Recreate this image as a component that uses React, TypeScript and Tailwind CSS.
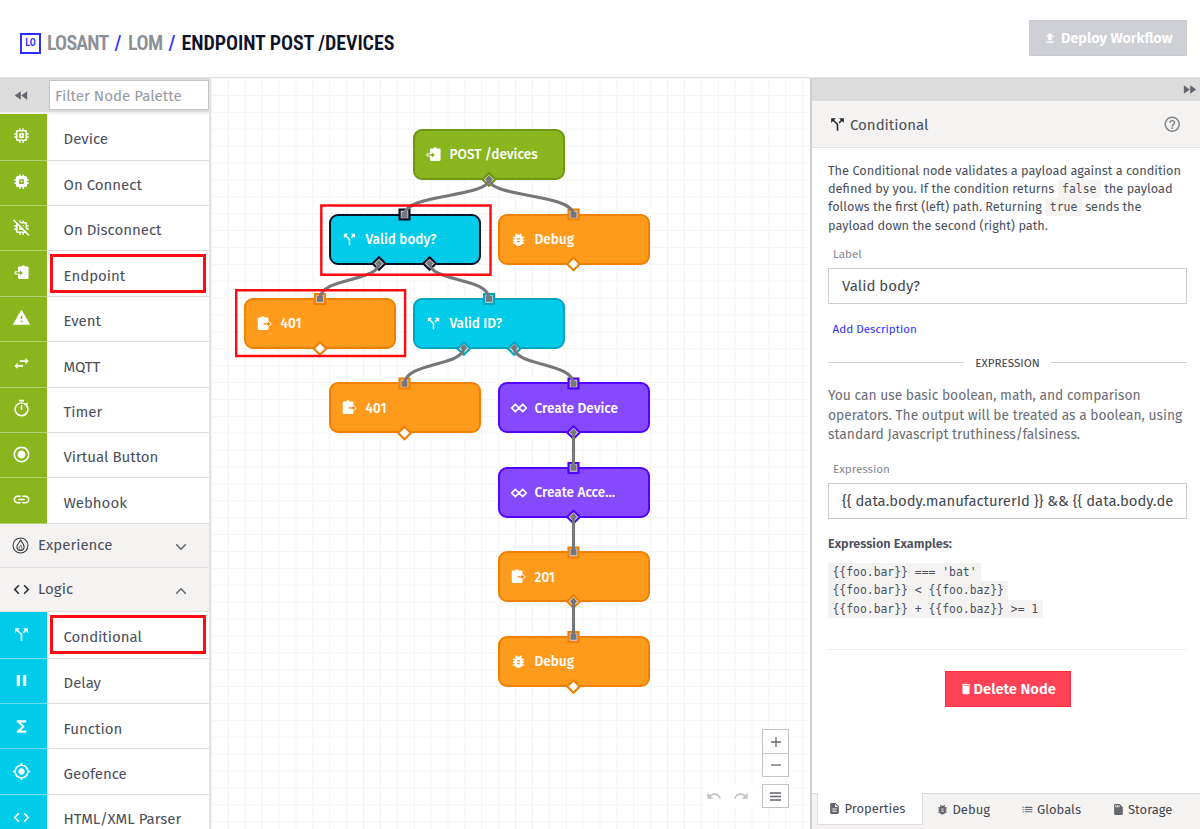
import type { ReactNode } from "react";
import {
  MdBugReport,
  MdCallSplit,
  MdCode,
  MdDelete,
  MdDescription,
  MdFastForward,
  MdFastRewind,
  MdFileUpload,
  MdFunctions,
  MdHelpOutline,
  MdLink,
  MdList,
  MdMemory,
  MdMyLocation,
  MdOutlineTimer,
  MdPause,
  MdRadioButtonChecked,
  MdRedo,
  MdSdStorage,
  MdSwapHoriz,
  MdUndo,
  MdWarning,
} from "react-icons/md";

/* ---------- custom icons ---------- */

function ChipSolid() {
  return (
    <svg viewBox="0 0 24 24" className="size-[19px]" fill="currentColor" fillRule="evenodd">
      <path d="M21 11V9h-2V7a2 2 0 0 0-2-2h-2V3h-2v2h-2V3H9v2H7a2 2 0 0 0-2 2v2H3v2h2v2H3v2h2v2a2 2 0 0 0 2 2h2v2h2v-2h2v2h2v-2h2a2 2 0 0 0 2-2v-2h2v-2h-2v-2zM9 9h6v6H9zm2 2v2h2v-2z" />
    </svg>
  );
}

function ChipOff() {
  return (
    <svg viewBox="0 0 24 24" className="size-[19px]">
      <path
        fill="currentColor"
        d="M15 9H9v6h6V9zm-2 4h-2v-2h2v2zm8-2V9h-2V7c0-1.100-.9-2-2-2h-2V3h-2v2h-2V3H9v2H7c-1.100 0-2 .9-2 2v2H3v2h2v2H3v2h2v2c0 1.100.9 2 2 2h2v2h2v-2h2v2h2v-2h2c1.100 0 2-.9 2-2v-2h2v-2h-2v-2h2zm-4 6H7V7h10v10z"
      />
      <path d="M4 1.500 23 20.500" stroke="#8ab51c" strokeWidth="2.200" />
      <path d="M2 2.500 21.500 22" stroke="currentColor" strokeWidth="1.900" />
    </svg>
  );
}

function ClipboardIn() {
  return (
    <svg viewBox="0 0 24 24" className="size-[17px]">
      <path
        fill="currentColor"
        d="M8.500 3.500H12a2.600 2.600 0 0 1 5 0h3.500A1.500 1.500 0 0 1 22 5v14.500a1.500 1.500 0 0 1-1.500 1.500h-12A1.500 1.500 0 0 1 7 19.500V5a1.500 1.500 0 0 1 1.500-1.500z"
      />
      <path
        d="M2.800 11h6.600V8l5.600 4.600-5.600 4.600v-3H2.800z"
        className="fill-[#84ad1a]"
        stroke="currentColor"
        strokeWidth="1.400"
        strokeLinejoin="round"
      />
    </svg>
  );
}

function ClipboardOut() {
  return (
    <svg viewBox="0 0 24 24" className="size-[17px]">
      <path
        fill="currentColor"
        d="M4 3.500h3.300a2.600 2.600 0 0 1 5 0H16A1.500 1.500 0 0 1 17.500 5v14.500A1.500 1.500 0 0 1 16 21H4a1.500 1.500 0 0 1-1.500-1.500V5A1.500 1.500 0 0 1 4 3.500z"
      />
      <path
        d="M10 11h6V8l5.600 4.600-5.600 4.600v-3h-6z"
        className="fill-[#f8890c]"
        stroke="currentColor"
        strokeWidth="1.400"
        strokeLinejoin="round"
      />
    </svg>
  );
}

function LinkedDiamonds() {
  return (
    <svg viewBox="0 0 18 10" className="h-[10px] w-[18px]" fill="none" stroke="currentColor" strokeWidth="1.600">
      <path d="M5.300 1.400 1.700 5l3.600 3.600 7.400-7.200L16.300 5l-3.600 3.600z" />
    </svg>
  );
}

function FlameCircle() {
  return (
    <svg viewBox="0 0 18 18" className="size-[17px] text-[#33363f]" fill="none" stroke="currentColor">
      <circle cx="9" cy="9" r="7.900" strokeWidth="1.100" />
      <path d="M9.200 2.800c.4 2.600 3.600 4.200 3.600 7.500 0 2.500-1.700 4-3.800 4s-3.800-1.500-3.800-4c0-3.300 3.600-4.700 4-7.500z" strokeWidth="1.100" />
      <path d="M9.300 8.500c.2 1.200 1.300 1.900 1.300 3.200 0 1.200-.7 1.800-1.600 1.800s-1.600-.6-1.600-1.800c0-1.300 1.700-2 1.900-3.200z" strokeWidth=".8" />
    </svg>
  );
}

/* ---------- header ---------- */

function Header() {
  return (
    <header className="flex h-[78px] shrink-0 items-start justify-between border-b border-[#e0e0e3] bg-white pl-5 pr-[13px]">
      <div className="mt-[30px] flex h-[25px] items-center font-['Roboto_Condensed','Roboto',sans-serif] text-[20px] font-semibold leading-[24px] text-[#8b8f96]">
        <span className="mt-px flex size-[21px] items-center justify-center border-2 border-[#2a2fff] text-[10px] leading-none text-[#2a2fff]">
          LO
        </span>
        <span className="ml-[6px] w-[67.500px] tracking-[-0.800px]">LOSANT</span>
        <span className="w-[13.500px] font-medium text-[#2a2fff]">/</span>
        <span className="w-[40.500px] tracking-[-0.500px]">LOM</span>
        <span className="w-[13px] font-medium text-[#2a2fff]">/</span>
        <span className="tracking-[-0.080px] text-[#0c1228]">ENDPOINT POST /DEVICES</span>
      </div>
      <button className="mt-[20px] flex h-9 w-[158px] items-center border border-[#c8cbd0] bg-[#ced0d5] pl-[13px] text-[14.450px] font-semibold text-white">
        <MdFileUpload className="mr-[4px] size-[14px]" />
        <span className="pt-[2px]">Deploy Workflow</span>
      </button>
    </header>
  );
}

/* ---------- palette ---------- */

function PaletteRow({ icon, label, tone, first, boxed }: { icon: ReactNode; label: string; tone: "green" | "cyan"; first?: boolean; boxed?: boolean }) {
  return (
    <div className={first ? "flex h-[46.600px] shrink-0" : "flex h-[45.400px] shrink-0"}>
      <div
        className={
          tone === "green"
            ? "flex w-[46.500px] items-center justify-center border-b border-[#b4ce70] bg-[#8ab51c] pb-[2px] pr-[3px] text-[19px] text-white"
            : "flex w-[46.500px] items-center justify-center border-b border-[#6cdff0] bg-[#00cbe8] pr-[3px] text-[19px] text-white"
        }
      >
        {icon}
      </div>
      <div className="relative flex flex-1 items-center border-b border-[#dcdce0] pl-[17px] pt-[5px]">
        {label}
        {boxed && <span className="absolute left-[3px] right-[3px] top-[3px] h-[39px] border-[3px] border-[#ff0a10]" />}
      </div>
    </div>
  );
}

function Chevron({ up }: { up?: boolean }) {
  return (
    <svg viewBox="0 0 12 8" className="mt-[3px] h-2 w-3" fill="none" stroke="#63666e" strokeWidth="1.600">
      <path d={up ? "M1.200 6.800 6 1.800l4.800 5" : "M1.200 1.200 6 6.200l4.800-5"} />
    </svg>
  );
}

function SectionHeader({ icon, label, open }: { icon: ReactNode; label: string; open?: boolean }) {
  return (
    <div className="flex h-[44.200px] shrink-0 items-center border-b border-[#dfdfe2] bg-[#f4f3f2] pl-3 pr-[22px]">
      <span className="flex w-[26px] items-center text-[19px] text-[#2b2e36]">{icon}</span>
      <span className="flex-1">{label}</span>
      <Chevron up={open} />
    </div>
  );
}

function Palette() {
  return (
    <aside className="flex w-[211px] shrink-0 flex-col overflow-hidden border-r-2 border-[#e2e2e5] bg-white text-[15px] text-[#4b4f5c]">
      <header className="flex h-[36px] shrink-0 items-center border-b-2 border-[#f0f0f0] bg-[#dcdcdd]">
        <span className="flex w-[49px] justify-center pr-[7px] text-[#63666c]">
          <MdFastRewind className="size-[17px]" />
        </span>
        <div className="flex h-[30px] flex-1 items-center border border-[#c6c6c9] bg-white pl-[5px] pt-[2px] text-[15.100px] text-[#96999f]">
          Filter Node Palette
        </div>
      </header>
      <PaletteRow tone="green" icon={<MdMemory />} label="Device" first />
      <PaletteRow tone="green" icon={<ChipSolid />} label="On Connect" />
      <PaletteRow tone="green" icon={<ChipOff />} label="On Disconnect" />
      <PaletteRow tone="green" icon={<ClipboardIn />} label="Endpoint" boxed />
      <PaletteRow tone="green" icon={<MdWarning />} label="Event" />
      <PaletteRow tone="green" icon={<MdSwapHoriz />} label="MQTT" />
      <PaletteRow tone="green" icon={<MdOutlineTimer />} label="Timer" />
      <PaletteRow tone="green" icon={<MdRadioButtonChecked />} label="Virtual Button" />
      <PaletteRow tone="green" icon={<MdLink />} label="Webhook" />
      <SectionHeader icon={<FlameCircle />} label="Experience" />
      <SectionHeader icon={<MdCode />} label="Logic" open />
      <PaletteRow tone="cyan" icon={<MdCallSplit />} label="Conditional" first boxed />
      <PaletteRow tone="cyan" icon={<MdPause />} label="Delay" />
      <PaletteRow tone="cyan" icon={<MdFunctions />} label="Function" />
      <PaletteRow tone="cyan" icon={<MdMyLocation />} label="Geofence" />
      <PaletteRow tone="cyan" icon={<MdCode />} label="HTML/XML Parser" />
    </aside>
  );
}

/* ---------- workflow canvas ---------- */

const nodes: { place: string; paint: string; icon: ReactNode; label: string }[] = [
  { place: "left-[202px] top-[51px]", paint: "border-[#6f9712] bg-[#8ab51c]", icon: <ClipboardIn />, label: "POST /devices" },
  { place: "left-[118px] top-[135.500px]", paint: "border-[#0c1228] bg-[#00cbe8]", icon: <MdCallSplit />, label: "Valid body?" },
  { place: "left-[287px] top-[135.500px]", paint: "border-[#f08000] bg-[#ff9b1c]", icon: <MdBugReport />, label: "Debug" },
  { place: "left-[33px] top-[220px]", paint: "border-[#f08000] bg-[#ff9b1c]", icon: <ClipboardOut />, label: "401" },
  { place: "left-[202px] top-[220px]", paint: "border-[#00a6c0] bg-[#00cbe8]", icon: <MdCallSplit />, label: "Valid ID?" },
  { place: "left-[118px] top-[304.400px]", paint: "border-[#f08000] bg-[#ff9b1c]", icon: <ClipboardOut />, label: "401" },
  { place: "left-[287px] top-[304.400px]", paint: "border-[#5105ff] bg-[#8549ff]", icon: <LinkedDiamonds />, label: "Create Device" },
  { place: "left-[287px] top-[389px]", paint: "border-[#5105ff] bg-[#8549ff]", icon: <LinkedDiamonds />, label: "Create Acce..." },
  { place: "left-[287px] top-[473.400px]", paint: "border-[#f08000] bg-[#ff9b1c]", icon: <ClipboardOut />, label: "201" },
  { place: "left-[287px] top-[558px]", paint: "border-[#f08000] bg-[#ff9b1c]", icon: <MdBugReport />, label: "Debug" },
];

const GREEN = "#6f9712";
const NAVY = "#0c1228";
const ORANGE = "#f08000";
const CYAN = "#00a6c0";
const PURPLE = "#5105ff";

const inputs: [number, number, string][] = [
  [193.5, 136.5, NAVY],
  [362.5, 136.5, ORANGE],
  [109, 221, ORANGE],
  [278, 221, CYAN],
  [193.5, 305.5, ORANGE],
  [362.5, 305.5, PURPLE],
  [362.5, 390, PURPLE],
  [362.5, 474.5, ORANGE],
  [362.5, 559, ORANGE],
];

const outputs: [number, number, string, boolean][] = [
  [278, 101.5, GREEN, true],
  [168, 185.5, NAVY, true],
  [218.6, 185.5, NAVY, true],
  [362.5, 186, ORANGE, false],
  [109, 270.5, ORANGE, false],
  [252.8, 270.5, CYAN, true],
  [303.2, 270.5, CYAN, true],
  [193.5, 355, ORANGE, false],
  [362.5, 354.5, PURPLE, true],
  [362.5, 439, PURPLE, true],
  [362.5, 523.5, ORANGE, true],
  [362.5, 608.5, ORANGE, false],
];

const wires: [number, number, number, number][] = [
  [278, 101, 193.5, 137],
  [278, 101, 362.5, 137],
  [168, 185, 109, 221],
  [218.6, 185, 278, 221],
  [252.8, 269.5, 193.5, 306],
  [303.2, 269.5, 362.5, 306],
  [362.5, 354, 362.5, 390],
  [362.5, 438.5, 362.5, 474.5],
  [362.5, 523, 362.5, 559],
];

function Wiring() {
  return (
    <svg viewBox="0 0 600 751" className="pointer-events-none absolute left-0 top-0 h-[751px] w-[600px]">
      {inputs.map(([x, y, c]) => (
        <rect key={`i${x}-${y}`} x={x - 4.9} y={y - 4.9} width="9.800" height="9.800" fill="#d9d9dc" stroke={c} strokeWidth="2.300" />
      ))}
      {outputs.map(([x, y, c, wired]) => (
        <path
          key={`o${x}-${y}`}
          d={`M${x} ${y - 6.3}l6.300 6.300-6.300 6.300-6.300-6.300z`}
          fill={wired ? "#e4e4e6" : "#ffffff"}
          stroke={c}
          strokeWidth="2.200"
        />
      ))}
      {wires.map(([x1, y1, x2, y2]) => (
        <g key={`w${x1}-${x2}-${y2}`}>
          <path d={`M${x1} ${y1}C${x1} ${y1 + 19} ${x2} ${y2 - 22} ${x2} ${y2}`} fill="none" stroke="#76777a" strokeWidth="3.100" />
          <path d={`M${x1} ${y1 - 3.6}l3.600 4-3.600 3.600-3.600-3.600z`} fill="#76777a" />
          <rect x={x2 - 3} y={y2 - 3.2} width="6" height="6" fill="#76777a" />
        </g>
      ))}
      <g fill="none" stroke="#ff0a10" strokeWidth="2.400">
        <path d="M110.300 127.500h169.200v69.200H110.300z" />
        <path d="M25.200 212.200h168.900v65.800H25.200z" />
      </g>
    </svg>
  );
}

function Canvas() {
  return (
    <main className="relative w-[599px] shrink-0 overflow-hidden bg-white bg-[linear-gradient(to_right,#f4f4f5_1px,transparent_1px),linear-gradient(to_bottom,#f4f4f5_1px,transparent_1px)] bg-[size:16.900px_16.900px]">
      {nodes.map((n) => (
        <div
          key={n.place}
          className={`absolute flex h-[51px] w-[152px] items-center rounded-[9px] border-2 pl-[9.500px] text-[13.600px] font-medium text-white ${n.place} ${n.paint}`}
        >
          <span className="flex w-[25px] items-center text-[17px]">{n.icon}</span>
          <span className="pt-[2px]">{n.label}</span>
        </div>
      ))}
      <Wiring />

      <div className="absolute bottom-[21px] right-[21px] flex items-end text-[#63666c]">
        <div className="mr-[5px] flex h-6 items-center bg-white text-[#c3c4c7]">
          <MdUndo className="mr-[11px] size-4" />
          <MdRedo className="mr-[8px] size-4" />
        </div>
        <div className="flex w-[27px] flex-col">
          <div className="flex h-[24px] items-center justify-center border border-b-0 border-[#c2c2c6] bg-white">
            <svg viewBox="0 0 10 10" className="size-[10px]" stroke="currentColor" strokeWidth="1.300">
              <path d="M0 5h10M5 0v10" />
            </svg>
          </div>
          <div className="flex h-[24px] items-center justify-center border border-[#c2c2c6] bg-white">
            <svg viewBox="0 0 10 10" className="size-[10px]" stroke="currentColor" strokeWidth="1.300">
              <path d="M0 5h10" />
            </svg>
          </div>
          <div className="mt-[7px] flex h-[24px] items-center justify-center border border-[#c2c2c6] bg-white">
            <svg viewBox="0 0 11 9" className="h-[9px] w-[11px]" stroke="currentColor" strokeWidth="1.300">
              <path d="M0 1h11M0 4.500h11M0 8h11" />
            </svg>
          </div>
        </div>
      </div>
    </main>
  );
}

/* ---------- properties panel ---------- */

function Code({ children }: { children: ReactNode }) {
  return (
    <code className="bg-[#f4f3f2] px-[4.500px] py-[2px] font-['DejaVu_Sans_Mono',monospace] text-[11.400px]">{children}</code>
  );
}

function Tab({ icon, label, size }: { icon: ReactNode; label: string; size: string }) {
  return (
    <div className={`flex items-center pt-[2px] ${size}`}>
      <span className="-mt-px mr-[3.500px] text-[13px] text-[#63666c]">{icon}</span>
      {label}
    </div>
  );
}

function Panel() {
  return (
    <aside className="flex min-w-0 flex-1 flex-col border-l-2 border-[#cfcfd2] bg-white text-[#4b4f5c]">
      <div className="flex h-[23px] shrink-0 items-center justify-end bg-[#dcdcdd] pr-[2px]">
        <MdFastForward className="size-[17px] text-[#63666c]" />
      </div>
      <div className="flex h-[47px] shrink-0 items-center border-b border-[#e4e4e6] bg-[#f4f3f2] pl-4 pr-[19px] text-[15px]">
        <MdCallSplit className="mr-[3px] size-[19px] text-[#23262e]" />
        <span className="flex-1 pt-[3px]">Conditional</span>
        <MdHelpOutline className="size-[18.500px] text-[#84878e]" />
      </div>

      <div className="flex flex-1 flex-col pl-4 pr-[13px] pt-[14px]">
        <p className="whitespace-nowrap text-[12.750px] leading-[18.200px]">
          The Conditional node validates a payload against a condition
          <br />
          defined by you. If the condition returns <Code>false</Code> the payload
          <br />
          follows the first (left) path. Returning <Code>true</Code> sends the
          <br />
          payload down the second (right) path.
        </p>
        <span className="mt-[11px] pl-[5px] text-[11.650px] leading-4 text-[#84878e]">Label</span>
        <div className="mt-[6px] flex h-[36px] shrink-0 items-center border border-[#cdcdd0] px-[13px] text-[15px] text-[#45484f]">
          Valid body?
        </div>
        <a className="mt-[17px] pl-[4.500px] text-[11.650px] leading-4 text-[#2a2fff]">Add Description</a>
        <div className="mt-[18px] flex items-center gap-[11px] text-[11.650px] leading-4 text-[#45484f]">
          <span className="h-px flex-1 bg-[#cfd0d4]" />
          EXPRESSION
          <span className="h-px flex-1 bg-[#cfd0d4]" />
        </div>
        <p className="mt-[15px] whitespace-nowrap text-[13.800px] leading-[19.700px] text-[#6a6d75]">
          You can use basic boolean, math, and comparison
          <br />
          operators. The output will be treated as a boolean, using
          <br />
          standard Javascript truthiness/falsiness.
        </p>
        <span className="mt-[16px] pl-[5px] text-[11.650px] leading-4 text-[#84878e]">Expression</span>
        <div className="mt-[6px] flex h-[36px] shrink-0 items-center border border-[#cdcdd0] px-[13px] text-[14.820px] text-[#45484f]">
          <span className="overflow-hidden whitespace-nowrap">{"{{ data.body.manufacturerId }} && {{ data.body.de"}</span>
        </div>
        <strong className="mt-[16px] text-[12.700px] font-semibold leading-[18px]">Expression Examples:</strong>
        <div className="mt-[10px] flex flex-col items-start font-['DejaVu_Sans_Mono',monospace] text-[11.400px] leading-[18.300px]">
          <code className="bg-[#f4f3f2] px-[4.500px] font-[inherit]">{"{{foo.bar}} === 'bat'"}</code>
          <code className="bg-[#f4f3f2] px-[4.500px] font-[inherit]">{"{{foo.bar}} < {{foo.baz}}"}</code>
          <code className="bg-[#f4f3f2] px-[4.500px] font-[inherit]">{"{{foo.bar}} + {{foo.baz}} >= 1"}</code>
        </div>
        <div className="mt-[31px] h-px bg-[#eeeeef]" />
        <button className="mt-[21px] flex h-9 w-[126px] shrink-0 items-center self-center border border-[#ff2b3e] bg-[#ff4256] pl-[13px] text-[14.700px] font-semibold text-white">
          <MdDelete className="mr-px size-[14px]" />
          Delete Node
        </button>
      </div>

      <div className="flex h-[36px] shrink-0 text-[13px] text-[#45484f]">
        <div className="w-[5px] border-t border-[#d9d9dd] bg-[#f4f3f2]" />
        <div className="w-[105.500px] bg-[#f4f3f2]">
          <div className="flex h-8 items-center border-x border-b border-[#dcdce0] bg-white pb-px">
            <Tab icon={<MdDescription />} label="Properties" size="pl-[10px]" />
          </div>
        </div>
        <div className="flex flex-1 border-t border-[#d9d9dd] bg-[#f4f3f2] pb-[5px]">
          <Tab icon={<MdBugReport />} label="Debug" size="w-[84.500px] pl-[13.500px]" />
          <Tab icon={<MdList />} label="Globals" size="w-[91px] pl-[13.500px]" />
          <Tab icon={<MdSdStorage className="-scale-x-100" />} label="Storage" size="pl-[13.500px]" />
        </div>
      </div>
    </aside>
  );
}

export default function App() {
  return (
    <div className="flex h-[829px] w-[1200px] flex-col overflow-hidden bg-white font-['Fira_Sans','Open_Sans','Noto_Sans',sans-serif]">
      <Header />
      <div className="flex min-h-0 flex-1">
        <Palette />
        <Canvas />
        <Panel />
      </div>
    </div>
  );
}
